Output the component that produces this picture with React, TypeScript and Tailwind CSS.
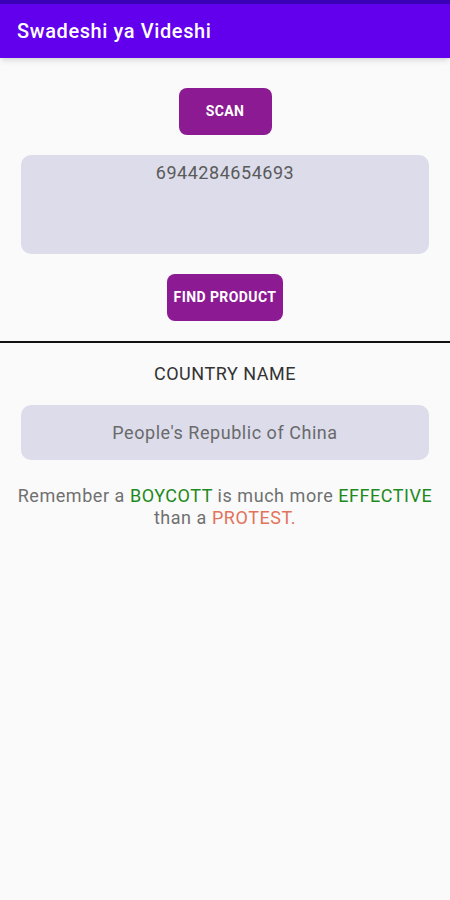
import React from "react";

const App = () => {
  return (
    <div
      className="w-[450px] h-[900px] flex flex-col bg-[#fafafa]"
      style={{ fontFamily: "Roboto, 'Liberation Sans', sans-serif" }}
    >
      <div className="h-[4px] bg-[#3a00b8]" />
      <header className="h-[54px] bg-[#6200ee] flex items-center px-[17px] shadow-md">
        <h1 className="text-white text-[20px] font-medium tracking-[0.03em]">Swadeshi ya Videshi</h1>
      </header>

      <div className="flex flex-col items-center">
        <button className="mt-[30px] w-[93px] h-[47px] rounded-[8px] bg-[#8c1a93] text-white text-[14px] font-bold tracking-[0.03em]">
          SCAN
        </button>
        <div className="mt-[20px] w-[408px] h-[99px] rounded-[10px] bg-[#dcdcea] flex justify-center pt-[7px]">
          <span className="text-[18px] text-[#5a5a5a] leading-[22px] tracking-[0.03em]">6944284654693</span>
        </div>
        <button className="mt-[20px] w-[116px] h-[47px] rounded-[8px] bg-[#8c1a93] text-white text-[14px] font-bold tracking-[0.03em]">
          FIND PRODUCT
        </button>
      </div>

      <div className="mt-[20px] h-[2px] bg-[#111]" />

      <div className="flex flex-col items-center">
        <p className="mt-[20px] text-[18px] text-[#333] leading-[22px] tracking-[0.03em]">COUNTRY NAME</p>
        <div className="mt-[20px] w-[408px] h-[55px] rounded-[10px] bg-[#dcdcea] flex items-center justify-center">
          <span className="text-[18px] text-[#6a6a6a] tracking-[0.03em]">People's Republic of China</span>
        </div>
        <p className="mt-[25px] px-[14px] text-center text-[18px] leading-[22px] tracking-[0.03em] text-[#707070]">
          Remember a <span className="text-[#1d8a1d]">BOYCOTT</span> is much more{" "}
          <span className="text-[#1d8a1d]">EFFECTIVE</span> than a{" "}
          <span className="text-[#e2735a]">PROTEST.</span>
        </p>
      </div>
    </div>
  );
};

export default App;
